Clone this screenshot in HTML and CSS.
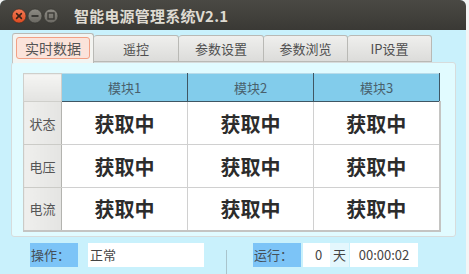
FILE: index.html
```html
<!DOCTYPE html>
<html lang="zh">
  <head>
    <meta charset="UTF-8" />
    <title>智能电源管理系统V2.1</title>
    <link rel="stylesheet" href="styles.css">
  </head>
  <body>
    <div class="window">
      <!-- Barre de titre -->
      <header class="titlebar">
        <div class="win-buttons">
          <svg width="48" height="16" viewBox="0 0 48 16">
            <defs>
              <linearGradient id="gClose" x1="0" y1="0" x2="0" y2="1">
                <stop offset="0" stop-color="#f57a55" />
                <stop offset="1" stop-color="#dc4a20" />
              </linearGradient>
              <linearGradient id="gGrey" x1="0" y1="0" x2="0" y2="1">
                <stop offset="0" stop-color="#8d8b84" />
                <stop offset="1" stop-color="#6a6862" />
              </linearGradient>
            </defs>
            <circle cx="8" cy="8" r="7" fill="url(#gClose)" stroke="#3a2a22" stroke-width="0.6" />
            <path d="M5.6 5.6 L10.4 10.4 M10.4 5.6 L5.6 10.4" stroke="#3b2218" stroke-width="1.6" stroke-linecap="round" />
            <circle cx="24" cy="8" r="7" fill="url(#gGrey)" stroke="#33322e" stroke-width="0.6" />
            <path d="M20.5 8 H27.5" stroke="#3a3935" stroke-width="1.8" />
            <circle cx="40" cy="8" r="7" fill="url(#gGrey)" stroke="#33322e" stroke-width="0.6" />
            <rect x="37" y="5" width="6" height="6" fill="none" stroke="#3a3935" stroke-width="1.4" />
          </svg>
        </div>
        <h1 class="title">智能电源管理系统V2.1</h1>
      </header>

      <!-- Onglets -->
      <nav class="tabs">
        <div class="tab active"><span>实时数据</span></div>
        <div class="tab">遥控</div>
        <div class="tab">参数设置</div>
        <div class="tab narrow">参数浏览</div>
        <div class="tab narrow">IP设置</div>
      </nav>

      <!-- Tableau des modules -->
      <section class="panel">
        <table class="data-table">
          <thead>
            <tr>
              <th class="corner"></th>
              <th>模块1</th>
              <th>模块2</th>
              <th class="last">模块3</th>
            </tr>
          </thead>
          <tbody>
            <tr>
              <th class="row-label">状态</th>
              <td>获取中</td>
              <td>获取中</td>
              <td>获取中</td>
            </tr>
            <tr>
              <th class="row-label">电压</th>
              <td>获取中</td>
              <td>获取中</td>
              <td>获取中</td>
            </tr>
            <tr>
              <th class="row-label">电流</th>
              <td>获取中</td>
              <td>获取中</td>
              <td>获取中</td>
            </tr>
          </tbody>
        </table>
      </section>

      <!-- Barre d'état -->
      <footer class="status">
        <span class="label">操作：</span>
        <span class="field op-field">正常</span>
        <span class="divider"></span>
        <span class="label run-label">运行：</span>
        <span class="field day-field">0</span>
        <span class="unit">天</span>
        <span class="field time-field">00:00:02</span>
      </footer>
    </div>
  </body>
</html>
```

FILE: styles.css
```css
/* Réinitialisation */
* {
  margin: 0;
  padding: 0;
  box-sizing: border-box;
}
body {
  width: 469px;
  height: 274px;
  overflow: hidden;
  background: #f4f4f4;
  font-family: "Noto Sans CJK SC", "DejaVu Sans", sans-serif;
  color: #555;
}
.window {
  width: 466px;
  height: 274px;
  background: #c9f1fc;
  border-radius: 6px 6px 0 0;
  overflow: hidden;
}
/* ================= TITRE ================= */
.titlebar {
  height: 30px;
  display: flex;
  align-items: center;
  padding-left: 11px;
  background: linear-gradient(#4a4944, #3a3935);
}
.win-buttons {
  display: flex;
  height: 16px;
  margin-top: 2px;
}
.title {
  margin-left: 15px;
  font-size: 15px;
  font-weight: bold;
  color: #dfdbd2;
  letter-spacing: 0.2px;
  line-height: 1;
  margin-top: 1px;
}
/* ================= ONGLETS ================= */
.tabs {
  display: flex;
  margin: 3px 0 0 12px;
  height: 29px;
  position: relative;
  z-index: 1;
}
.tab {
  width: 85px;
  height: 27px;
  margin-top: 2px;
  display: flex;
  align-items: center;
  justify-content: center;
  font-size: 13px;
  color: #4f4f4f;
  background: linear-gradient(#efefed, #dcdcda);
  border: 1px solid #b9b9b5;
  border-left: none;
  border-radius: 3px 3px 0 0;
}
.tab.narrow {
  width: 84px;
}
.tab.active {
  width: 82px;
  height: 30px;
  margin-top: 0;
  padding: 3px 3px 4px;
  background: #f3f4f1;
  border-left: 1px solid #c3c3bf;
  border-bottom: none;
}
.tab.active span {
  flex: 1;
  height: 100%;
  display: flex;
  align-items: center;
  justify-content: center;
  font-size: 14px;
  background: #fbe3da;
  border: 1px solid #f2a084;
  border-radius: 3px;
  color: #555;
}
/* ================= PANNEAU ================= */
.panel {
  width: 445px;
  height: 175px;
  margin-left: 11px;
  padding: 10px 0 0 11px;
  background: #e1fbff;
  border: 1px solid #d7dcdc;
  border-radius: 3px;
}
.data-table {
  border-collapse: collapse;
  table-layout: fixed;
  width: 416px;
}
.data-table thead th {
  height: 28px;
  font-size: 13px;
  font-weight: normal;
  color: #49606c;
  background: #82cceb;
  border: 1px solid #3f5663;
  border-top: 1px solid #b9dcea;
  width: 126px;
}
.data-table thead th.corner {
  width: 38px;
  background: linear-gradient(#f5f5f3, #e3e3e1);
  border: 1px solid #cfcfcb;
}
.data-table .row-label {
  height: 43px;
  font-size: 13px;
  font-weight: normal;
  color: #555;
  background: linear-gradient(90deg, #efefed, #e4e4e2);
  border: 1px solid #cbcbc7;
  border-right-color: #b3b3af;
}
.data-table td {
  height: 43px;
  text-align: center;
  font-size: 20px;
  font-weight: bold;
  color: #2c2c2c;
  background: #fff;
  border: 1px solid #d0d0d0;
}
.data-table td:last-child {
  border-right: 2px solid #c4c4c2;
}
.data-table tbody tr:last-child td,
.data-table tbody tr:last-child th {
  border-bottom: 2px solid #c4c4c2;
}
/* ================= BARRE D'ETAT ================= */
.status {
  display: flex;
  align-items: center;
  height: 24px;
  margin-top: 6px;
  padding-left: 30px;
  font-size: 13px;
}
.label {
  width: 48px;
  height: 24px;
  line-height: 24px;
  padding-left: 1px;
  background: #7cc4f7;
  color: #454f58;
}
.field {
  height: 24px;
  line-height: 24px;
  background: #fff;
  color: #444;
}
.op-field {
  width: 116px;
  margin-left: 10px;
  padding-left: 2px;
}
.divider {
  width: 1px;
  height: 31px;
  margin: 7px 0 0 22px;
  align-self: flex-start;
  background: #a9c4cc;
}
.run-label {
  margin-left: 26px;
}
.day-field {
  width: 27px;
  margin-left: 2px;
  text-align: center;
  padding-left: 4px;
}
.unit {
  width: 19px;
  height: 24px;
  line-height: 24px;
  text-align: center;
  background: #e4f7fd;
  color: #444;
}
.time-field {
  width: 68px;
  margin-left: 1px;
  text-align: center;
}
```
